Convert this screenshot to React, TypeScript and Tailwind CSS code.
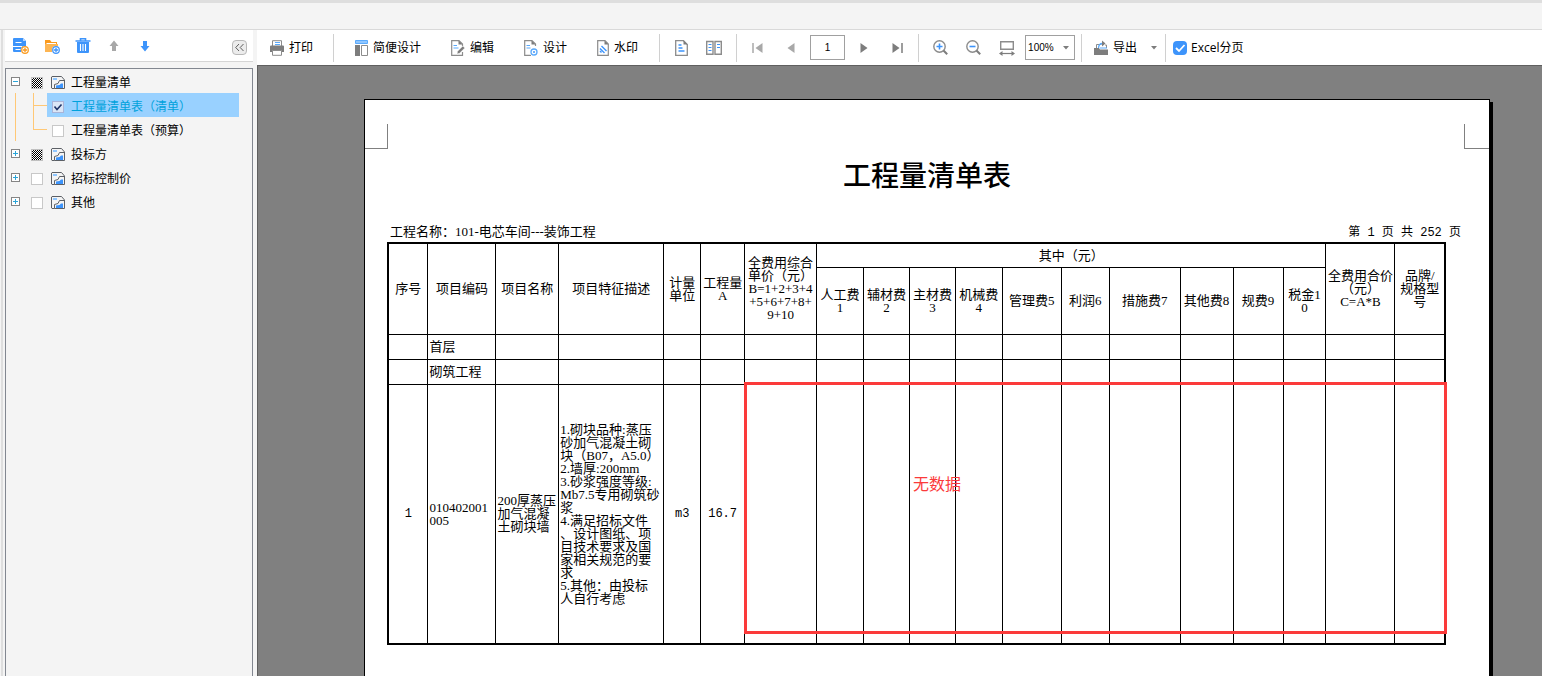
// App.tsx
import { ReactNode } from 'react';
import clsx from 'clsx';

interface TreeItem {
  id: string;
  label: string;
  state: 'mixed' | 'off';
  open?: boolean;
  children?: { id: string; label: string; checked: boolean }[];
}

const tree: TreeItem[] = [
  {
    id: 'bill',
    label: '工程量清单',
    state: 'mixed',
    open: true,
    children: [
      { id: 'bill-list', label: '工程量清单表（清单）', checked: true },
      { id: 'bill-budget', label: '工程量清单表（预算）', checked: false },
    ],
  },
  { id: 'bidder', label: '投标方', state: 'mixed' },
  { id: 'control', label: '招标控制价', state: 'off' },
  { id: 'other', label: '其他', state: 'off' },
];

// relative column widths of the report table
const columns = [40, 68, 63, 105, 37, 44, 72, 47, 46, 46, 47, 59, 48, 71, 53, 50, 43, 69, 50];
const total = columns.reduce((a, b) => a + b, 0);

const fees = ['人工费\n1', '辅材费\n2', '主材费\n3', '机械费\n4', '管理费5', '利润6', '措施费7', '其他费8', '规费9', '税金1\n0'];

const description = `1.砌块品种:蒸压
砂加气混凝土砌
块（B07，A5.0）
2.墙厚:200mm
3.砂浆强度等级:
Mb7.5专用砌筑砂
浆
4.满足招标文件
、设计图纸、项
目技术要求及国
家相关规范的要
求
5.其他：由投标
人自行考虑`;

/* ---------- icons ---------- */

function Svg({ w = 16, h = 16, children }: { w?: number; h?: number; children: ReactNode }) {
  return (
    <svg width={w} height={h} viewBox={`0 0 ${w} ${h}`} fill="none" className="shrink-0" aria-hidden="true">
      {children}
    </svg>
  );
}

const Plus = ({ color }: { color: string }) => (
  <g>
    <circle cx="12" cy="12" r="4" fill="#fff" />
    <circle cx="12" cy="12" r="3.3" fill="#fff" stroke={color} strokeWidth="1.2" />
    <path d="M12 9.8v4.4M9.8 12h4.4" stroke={color} strokeWidth="1.3" />
  </g>
);

const NewReportIcon = () => (
  <Svg>
    <path d="M2 0h8l3 3v11H1a1 1 0 0 1-1-1V1a1 1 0 0 1 1-1z" fill="#3d94fb" />
    <path d="M10 0v3h3z" fill="#b5d6fd" />
    <path d="M2.500 4.500h6M0 8.500h9M2.500 11.500h5" stroke="#fff" strokeWidth="1.2" />
    <Plus color="#fb9a1c" />
  </Svg>
);

const NewFolderIcon = () => (
  <Svg>
    <path d="M1 2h5l1.5 2H13v2H1z" fill="#fb9a1c" />
    <path d="M2.5 6H14v8H1V6z" fill="#fdb552" />
    <path d="M2.5 5.5H12" stroke="#fff" />
    <Plus color="#3d94fb" />
  </Svg>
);

const TrashIcon = () => (
  <Svg>
    <path d="M5.500 2.500V.8h5v1.700M.5 3h15" stroke="#3d94fb" strokeWidth="1.6" />
    <path d="M2 4h12v10a1 1 0 0 1-1 1H3a1 1 0 0 1-1-1z" fill="#3d94fb" />
    <path d="M5.500 6v7M8 6v7M10.500 6v7" stroke="#fff" strokeWidth="1.1" />
  </Svg>
);

const UpIcon = () => (
  <Svg w={10} h={12}>
    <path d="M5 .5L9.500 6H7v5H3V6H.5z" fill="#a8a8a8" />
  </Svg>
);

const DownIcon = () => (
  <Svg w={10} h={12}>
    <path d="M5 11.500L.5 6H3V1h4v5h2.500z" fill="#3d94fb" />
  </Svg>
);

const ReportIcon = () => (
  <Svg w={14} h={14}>
    <path d="M3.500 12.500H1L.5 12V1L1 .5h9.500l3 3.500v8.500h-10V8.500L7 7.500l1.500-3h5" stroke="#5c6066" />
    <path d="M2 2h4v2H2z" fill="#8fc6ff" />
    <path d="M5 12V9.500l3.500-.5 1.500-1.500h2V12z" fill="#3d94fb" />
  </Svg>
);

const PrinterIcon = () => (
  <Svg w={14} h={16}>
    <path d="M2.500 6V.7h9V6" stroke="#8c8c8c" fill="#fff" />
    <path d="M5 2.500h5M5 4.500h5" stroke="#5aa9fb" />
    <path d="M1 5.500h12a1 1 0 0 1 1 1V12H0V6.500a1 1 0 0 1 1-1z" fill="#7d7d7d" />
    <path d="M2.500 10.500h9v4.800h-9z" fill="#fff" stroke="#8c8c8c" />
  </Svg>
);

const LayoutIcon = () => (
  <Svg w={13} h={16}>
    <path d="M.5.5h12v3H.5z" fill="#8fc6ff" stroke="#5aa9fb" />
    <path d="M0 5h5v11H0z" fill="#7d7d7d" />
    <path d="M6.500 5.500h6v10h-6z" stroke="#8c8c8c" />
  </Svg>
);

const Sheet = ({ children }: { children: ReactNode }) => (
  <Svg w={14} h={16}>
    <path d="M11.500 6V4L8 .7H.7v14.600H7" stroke="#8c8c8c" strokeWidth="1.2" />
    <path d="M7.500.5v4h4z" fill="#7d7d7d" />
    {children}
  </Svg>
);

const EditIcon = () => (
  <Sheet>
    <path d="M7 15.300h4.500V12" stroke="#8c8c8c" strokeWidth="1.2" />
    <path d="M2.500 5.500h3.500M2.500 8h5" stroke="#5aa9fb" strokeWidth="1.2" />
    <path d="M6 14l.6-2.800L11.800 6l2 2-5.200 5.200z" fill="#7d7d7d" stroke="#fff" strokeWidth=".5" />
  </Sheet>
);

const DesignIcon = () => (
  <Sheet>
    <path d="M2.500 5.500h3.500M2.500 8h4" stroke="#5aa9fb" strokeWidth="1.2" />
    <circle cx="10" cy="12" r="4" fill="#fff" />
    <circle cx="10" cy="12" r="3" stroke="#5aa9fb" strokeWidth="1.300" />
    <circle cx="10" cy="12" r="1" fill="#3d94fb" />
  </Sheet>
);

const WatermarkIcon = () => (
  <Svg w={12} h={16}>
    <path d="M8 .7H.7v14.600h10.600V4z" stroke="#8c8c8c" strokeWidth="1.200" />
    <path d="M7.500.5v4h4z" fill="#7d7d7d" />
    <path d="M3 8.500l4.500 4.500M4.500 6l5 5M3 11l1.500 1.500" stroke="#3d94fb" strokeWidth="1.400" />
  </Svg>
);

const SinglePageIcon = () => (
  <Svg w={13} h={16}>
    <path d="M8.500.7H.7v14.600h11.600V4.500z" stroke="#8c8c8c" strokeWidth="1.300" />
    <path d="M8.500.5v4h4z" fill="#7d7d7d" />
    <path d="M3.500 5h3M3.500 8h4M3.500 11h6" stroke="#3d94fb" strokeWidth="1.400" />
  </Svg>
);

const TwoPageIcon = () => (
  <Svg w={16} h={16}>
    <path d="M.7 1.500h6.300v12.700H.7zM9 1.500h6.300v12.700H9z" stroke="#8c8c8c" strokeWidth="1.400" />
    <path d="M2.500 4.500h3M2.500 7.500h3M2.500 10.500h3M11 4.500h3M11 7.500h3" stroke="#3d94fb" strokeWidth="1.200" />
  </Svg>
);

const FirstIcon = () => (
  <Svg w={11} h={10}>
    <path d="M1 0v10" stroke="#a8a8a8" strokeWidth="1.500" />
    <path d="M10.500 0v10L3.500 5z" fill="#a8a8a8" />
  </Svg>
);

const PrevIcon = () => (
  <Svg w={8} h={10}>
    <path d="M7.500 0v10L.5 5z" fill="#a8a8a8" />
  </Svg>
);

const NextIcon = () => (
  <Svg w={8} h={10}>
    <path d="M.5 0v10l7-5z" fill="#7d7d7d" />
  </Svg>
);

const LastIcon = () => (
  <Svg w={11} h={10}>
    <path d="M10 0v10" stroke="#7d7d7d" strokeWidth="1.500" />
    <path d="M.5 0v10l7-5z" fill="#7d7d7d" />
  </Svg>
);

const ZoomIcon = ({ plus }: { plus?: boolean }) => (
  <Svg w={15} h={15}>
    <circle cx="6.500" cy="6.500" r="5.700" stroke="#8c8c8c" strokeWidth="1.400" />
    <path d="M10.500 10.500l3.700 3.700" stroke="#7d7d7d" strokeWidth="2" />
    <path d={plus ? 'M3.500 6.500h6M6.500 3.500v6' : 'M3.500 6.500h6'} stroke="#3d94fb" strokeWidth="1.600" />
  </Svg>
);

const FitWidthIcon = () => (
  <Svg w={16} h={16}>
    <path d="M1.700 1.700h12.600v7.600H1.700z" stroke="#8c8c8c" strokeWidth="1.400" />
    <path d="M2 13.500h12" stroke="#7d7d7d" strokeWidth="1.200" />
    <path d="M0 13.500L3.500 11v5zM16 13.500L12.500 11v5z" fill="#7d7d7d" />
  </Svg>
);

const ExportIcon = () => (
  <Svg w={14} h={15}>
    <path d="M2.500 8V4.500h5M11 5h1.500v3" stroke="#8c8c8c" />
    <path d="M4.500 8.500c0-3.500 1.500-5 4-5" stroke="#5aa9fb" strokeWidth="1.300" />
    <path d="M8 .5l3.500 3L8 6.500z" fill="#7d7d7d" />
    <path d="M0 8h5l1 1.500h8V15H0z" fill="#7d7d7d" />
    <path d="M6 8h7" stroke="#5aa9fb" />
  </Svg>
);

const CaretIcon = () => (
  <Svg w={6} h={4}>
    <path d="M0 0h6L3 3.500z" fill="#7d7d7d" />
  </Svg>
);

/* ---------- shared pieces ---------- */

function ToolButton({ icon, label, title }: { icon: ReactNode; label?: string; title?: string }) {
  return (
    <button type="button" title={title} aria-label={label ?? title} className="flex shrink-0 items-center gap-[5px] whitespace-nowrap">
      {icon}
      {label}
    </button>
  );
}

const Divider = () => <div className="h-7 w-px shrink-0 bg-[#d0d0d0]" />;

function TreeCheck({ id, state }: { id: string; state: 'mixed' | 'on' | 'off' }) {
  return (
    <span className="relative flex size-3 shrink-0">
      <input
        id={id}
        type="checkbox"
        defaultChecked={state === 'on'}
        className={clsx(
          'size-3 appearance-none border',
          state === 'mixed' && 'border-[#c0c0c0] bg-[repeating-conic-gradient(#000_0_25%,#fff_0_50%)] bg-[length:2px_2px]',
          state === 'on' && 'border-[#a9b4d8] bg-[#dbe6f6]',
          state === 'off' && 'border-[#c8c8c8] bg-white',
        )}
      />
      {state === 'on' && (
        <svg viewBox="0 0 12 12" className="pointer-events-none absolute inset-0 size-3" fill="none" aria-hidden="true">
          <path d="M2.500 5.500L5 8.500l4.500-5" stroke="#1f3468" strokeWidth="1.600" />
        </svg>
      )}
    </span>
  );
}

/* ---------- left panel ---------- */

function Sidebar() {
  return (
    <aside className="flex w-[254px] shrink-0 flex-col border-l-2 border-[#dedede] px-[2px]">
      <div className="flex h-8 items-center border-b border-[#d5d5d5] bg-white pl-2 pr-[6px]">
        <div className="flex flex-1 items-center gap-[15px]">
          <ToolButton icon={<NewReportIcon />} title="新建报表" />
          <ToolButton icon={<NewFolderIcon />} title="新建分组" />
          <ToolButton icon={<TrashIcon />} title="删除" />
          <div className="flex gap-[21px] pl-[3px]">
            <ToolButton icon={<UpIcon />} title="上移" />
            <ToolButton icon={<DownIcon />} title="下移" />
          </div>
        </div>
        <button type="button" aria-label="收起" className="mt-1 flex size-[15px] items-center justify-center rounded-sm border border-[#b8b8b8] bg-[#ececec]">
          <svg width="9" height="7" viewBox="0 0 9 7" fill="none" stroke="#5f5f5f" aria-hidden="true">
            <path d="M4 0L.7 3.500 4 7M8.500 0L5.200 3.500 8.500 7" />
          </svg>
        </button>
      </div>
      <nav className="mt-[6px] flex-1 border border-b-0 border-[#828790]">
        {tree.map((item) => (
          <div key={item.id}>
            <div className="flex h-6 items-center pl-[5px] pt-1">
              <button type="button" aria-label={item.label} aria-expanded={!!item.open} className="mb-[3px] flex size-[9px] shrink-0 items-center justify-center border border-[#858585] bg-white">
                <svg width="5" height="5" viewBox="0 0 5 5" stroke="#2aa5d8" aria-hidden="true">
                  <path d={item.open ? 'M0 2.500h5' : 'M0 2.500h5M2.500 0v5'} />
                </svg>
              </button>
              <label htmlFor={item.id} className="flex items-center pl-[11px]">
                <TreeCheck id={item.id} state={item.state} />
                <span className="pl-2 pr-[6px]">
                  <ReportIcon />
                </span>
                {item.label}
              </label>
            </div>
            {item.children && (
              <div className="ml-[9px] border-l border-[#ffc876] pl-[17px]">
                {item.children.map((child, i) => (
                  <div key={child.id} className="flex h-6">
                    <div className={clsx('w-[14px] shrink-0', i === 0 && 'border-l border-[#ffc876]')}>
                      <div className={clsx('h-[13px] border-b border-[#ffc876]', i > 0 && 'border-l')} />
                    </div>
                    <label
                      htmlFor={child.id}
                      className={clsx('flex w-48 items-center gap-[7px] pl-[5px] pt-1', child.checked && 'bg-[#99d1ff] text-[#00a2dc]')}
                    >
                      <TreeCheck id={child.id} state={child.checked ? 'on' : 'off'} />
                      {child.label}
                    </label>
                  </div>
                ))}
              </div>
            )}
          </div>
        ))}
      </nav>
    </aside>
  );
}

/* ---------- preview toolbar ---------- */

function Toolbar() {
  return (
    <div className="flex h-[35px] shrink-0 items-center bg-white">
      <div className="flex pl-[13px] pr-5">
        <ToolButton icon={<PrinterIcon />} label="打印" />
      </div>
      <Divider />
      <div className="flex gap-[30px] pl-[21px] pr-[21px]">
        <ToolButton icon={<LayoutIcon />} label="简便设计" />
        <ToolButton icon={<EditIcon />} label="编辑" />
        <ToolButton icon={<DesignIcon />} label="设计" />
        <ToolButton icon={<WatermarkIcon />} label="水印" />
      </div>
      <Divider />
      <div className="flex gap-[18px] pl-[15px] pr-[14px]">
        <ToolButton icon={<SinglePageIcon />} title="单页" />
        <ToolButton icon={<TwoPageIcon />} title="双页" />
      </div>
      <Divider />
      <div className="flex items-center gap-[15px] px-[15px]">
        <div className="flex gap-6">
          <ToolButton icon={<FirstIcon />} title="首页" />
          <ToolButton icon={<PrevIcon />} title="上一页" />
        </div>
        <input
          type="text"
          aria-label="页码"
          defaultValue="1"
          className="h-[25px] w-[35px] border border-[#a0a0a0] bg-white text-center text-[10px]"
        />
        <div className="flex gap-6">
          <ToolButton icon={<NextIcon />} title="下一页" />
          <ToolButton icon={<LastIcon />} title="末页" />
        </div>
      </div>
      <Divider />
      <div className="flex items-center pl-[14px] pr-[6px]">
        <div className="flex gap-[18px] pr-[10px]">
          <ToolButton icon={<ZoomIcon plus />} title="放大" />
          <ToolButton icon={<ZoomIcon />} title="缩小" />
          <ToolButton icon={<FitWidthIcon />} title="适合宽度" />
        </div>
        <div className="relative flex items-center">
          <select aria-label="缩放比例" className="h-[25px] w-[50px] appearance-none border border-[#a0a0a0] bg-white pl-[2px] text-[10px]">
            <option>100%</option>
          </select>
          <span className="pointer-events-none absolute right-[6px]">
            <CaretIcon />
          </span>
        </div>
      </div>
      <Divider />
      <div className="flex items-center gap-[14px] pl-3 pr-2">
        <ToolButton icon={<ExportIcon />} label="导出" />
        <ToolButton icon={<CaretIcon />} title="导出格式" />
      </div>
      <Divider />
      <label htmlFor="excel-paging" className="flex shrink-0 items-center gap-1 whitespace-nowrap pl-[7px] font-['Open_Sans','Noto_Sans_CJK_SC',sans-serif]">
        <span className="relative flex size-[14px]">
          <input id="excel-paging" type="checkbox" defaultChecked className="size-[14px] appearance-none rounded-sm bg-[#3d94fb]" />
          <svg viewBox="0 0 14 14" className="pointer-events-none absolute inset-0 size-[14px]" fill="none" aria-hidden="true">
            <path d="M3 7l3 3 5.500-6" stroke="#fff" strokeWidth="1.800" />
          </svg>
        </span>
        Excel分页
      </label>
    </div>
  );
}

/* ---------- report ---------- */

function EmptyCells({ count }: { count: number }) {
  return (
    <>
      {Array.from({ length: count }, (_, i) => (
        <td key={i} className="border border-black" />
      ))}
    </>
  );
}

function Head({ children, colSpan, rowSpan }: { children: ReactNode; colSpan?: number; rowSpan?: number }) {
  return (
    <th colSpan={colSpan} rowSpan={rowSpan} className="whitespace-pre border border-black p-0 text-center font-normal">
      {children}
    </th>
  );
}

function ReportTable() {
  return (
    <div className="relative">
      <table className="w-full table-fixed border-collapse border-2 border-black">
        <colgroup>
          {columns.map((w, i) => (
            <col key={i} style={{ width: `${(w / total) * 100}%` }} />
          ))}
        </colgroup>
        <thead>
          <tr className="h-6">
            <Head rowSpan={2}>序号</Head>
            <Head rowSpan={2}>项目编码</Head>
            <Head rowSpan={2}>项目名称</Head>
            <Head rowSpan={2}>项目特征描述</Head>
            <Head rowSpan={2}>{'计量\n单位'}</Head>
            <Head rowSpan={2}>{'工程量\nA'}</Head>
            <Head rowSpan={2}>{'全费用综合\n单价（元）\nB=1+2+3+4\n+5+6+7+8+\n9+10'}</Head>
            <Head colSpan={10}>其中（元）</Head>
            <Head rowSpan={2}>{'全费用合价\n（元）\nC=A*B'}</Head>
            <Head rowSpan={2}>{'品牌/\n规格型\n号'}</Head>
          </tr>
          <tr className="h-[67px]">
            {fees.map((fee) => (
              <Head key={fee}>{fee}</Head>
            ))}
          </tr>
        </thead>
        <tbody>
          {['首层', '砌筑工程'].map((section) => (
            <tr key={section} className="h-[25px]">
              <EmptyCells count={1} />
              <td className="border border-black px-px py-0">{section}</td>
              <EmptyCells count={17} />
            </tr>
          ))}
          <tr className="h-[260px]">
            <td className="border border-black p-0 text-center font-['Liberation_Mono',monospace] text-xs">1</td>
            <td className="whitespace-pre border border-black px-px py-0">{'010402001\n005'}</td>
            <td className="whitespace-pre border border-black px-px py-0">{'200厚蒸压\n加气混凝\n土砌块墙'}</td>
            <td className="whitespace-pre border border-black px-px py-0">{description}</td>
            <td className="border border-black p-0 text-center font-['Liberation_Mono',monospace] text-xs">m3</td>
            <td className="border border-black p-0 text-center font-['Liberation_Mono',monospace] text-xs">16.7</td>
            <EmptyCells count={13} />
          </tr>
        </tbody>
      </table>
      {/* note laid over the empty price columns */}
      <div className="absolute -right-px left-[357px] top-[140px] h-[252px] border-3 border-[#fb3a3a] pl-[166px] pt-[88px] text-base leading-6 text-[#fb3a3a]">
        无数据
      </div>
    </div>
  );
}

function Paper() {
  return (
    <article className="flex-1 border border-b-0 border-black bg-white font-['Liberation_Serif','Noto_Sans_CJK_SC',serif] text-[13px] leading-[13px] shadow-[3px_3px_0_#000]">
      <div className="flex justify-between pt-6">
        <div className="h-[25px] w-[23px] border-b border-r border-[#808080]" />
        <div className="h-[25px] w-[25px] border-b border-l border-[#808080]" />
      </div>
      <h1 className="pt-[10px] text-center text-[28px] font-medium leading-9">工程量清单表</h1>
      <div className="flex h-[47px] items-baseline justify-between pl-[25px] pr-7 pt-[30px]">
        <span>工程名称：101-电芯车间---装饰工程</span>
        <span className="font-['Liberation_Mono','Noto_Sans_CJK_SC',monospace] text-xs leading-[13px]">第 1 页 共 252 页</span>
      </div>
      <div className="pl-[22px] pr-[43px]">
        <ReportTable />
      </div>
    </article>
  );
}

function App() {
  return (
    <div className="flex h-screen flex-col overflow-hidden bg-[#f4f4f4] font-['Liberation_Sans','Noto_Sans_CJK_SC',sans-serif] text-xs text-black">
      <header className="h-[30px] shrink-0 border-b border-t-3 border-b-[#d9d9d9] border-t-[#dedede]" />
      <div className="flex min-h-0 flex-1">
        <div className="w-px shrink-0" />
        <Sidebar />
        <main className="ml-[2px] flex min-w-0 flex-1 flex-col">
          <Toolbar />
          <div className="flex min-h-0 flex-1 border-l border-t border-[#5f5f5f] bg-[#808080] pl-[106px] pr-[52px] pt-[33px]">
            <Paper />
          </div>
        </main>
      </div>
    </div>
  );
}

export default App;
